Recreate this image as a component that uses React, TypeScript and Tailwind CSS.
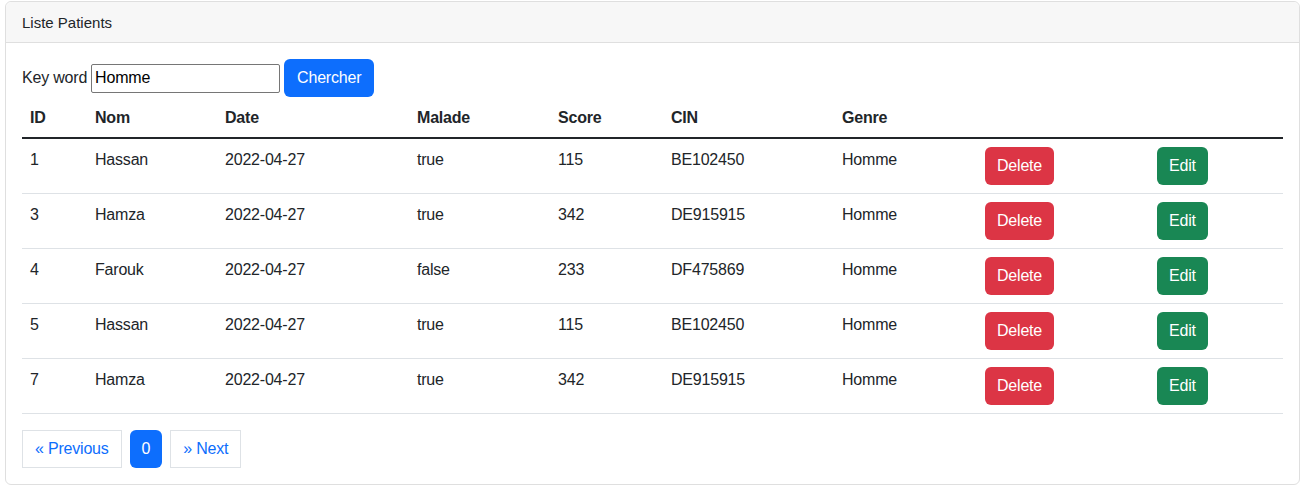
import { useState } from "react";

type Patient = {
  id: number;
  nom: string;
  date: string;
  malade: boolean;
  score: number;
  cin: string;
  genre: string;
};

const patients: Patient[] = [
  { id: 1, nom: "Hassan", date: "2022-04-27", malade: true, score: 115, cin: "BE102450", genre: "Homme" },
  { id: 3, nom: "Hamza", date: "2022-04-27", malade: true, score: 342, cin: "DE915915", genre: "Homme" },
  { id: 4, nom: "Farouk", date: "2022-04-27", malade: false, score: 233, cin: "DF475869", genre: "Homme" },
  { id: 5, nom: "Hassan", date: "2022-04-27", malade: true, score: 115, cin: "BE102450", genre: "Homme" },
  { id: 7, nom: "Hamza", date: "2022-04-27", malade: true, score: 342, cin: "DE915915", genre: "Homme" },
];

const headers = ["ID", "Nom", "Date", "Malade", "Score", "CIN", "Genre", "", ""];
const widths = ["w-[65px]", "w-[130px]", "w-[192px]", "w-[141px]", "w-[113px]", "w-[171px]", "w-[143px]", "w-[172px]", "w-auto"];

const App = () => {
  const [keyword, setKeyword] = useState("Homme");

  return (
    <div className="min-h-screen bg-white pt-px pl-[5px] pr-[9px] font-['Liberation_Sans',Arial,sans-serif] text-[16px] leading-6 text-[#212529] tracking-[-0.2px]">
      <div className="border border-[#dfdfdf] rounded-md">
        {/* Card header */}
        <div className="bg-[#f7f7f7] border-b border-[#dfdfdf] px-4 pt-[9px] pb-[7px] rounded-t-md text-[15px] tracking-normal">
          Liste Patients
        </div>

        <div className="p-4">
          {/* Search form */}
          <form className="flex items-center h-[38px]" onSubmit={(e) => e.preventDefault()}>
            <label className="mr-1">Key word</label>
            <input
              type="text"
              value={keyword}
              onChange={(e) => setKeyword(e.target.value)}
              className="w-[189px] h-[29px] border border-[#767676] rounded-[2px] px-[3px] text-[16px] text-black outline-none"
            />
            <button
              type="submit"
              className="ml-1 h-[38px] px-[13px] rounded-md bg-[#0d6efd] text-white"
            >
              Chercher
            </button>
          </form>

          {/* Patients table */}
          <table className="w-full border-collapse table-fixed">
            <thead>
              <tr className="border-b-2 border-[#212529]">
                {headers.map((h, i) => (
                  <th key={i} className={`${widths[i]} text-left font-bold px-2 pt-[9px] pb-[7px] h-10`}>
                    {h}
                  </th>
                ))}
              </tr>
            </thead>
            <tbody>
              {patients.map((p) => (
                <tr key={p.id} className="border-b border-[#dee2e6]">
                  <td className="px-2 pt-[9px] pb-[7px] align-top">{p.id}</td>
                  <td className="px-2 pt-[9px] pb-[7px] align-top">{p.nom}</td>
                  <td className="px-2 pt-[9px] pb-[7px] align-top">{p.date}</td>
                  <td className="px-2 pt-[9px] pb-[7px] align-top">{String(p.malade)}</td>
                  <td className="px-2 pt-[9px] pb-[7px] align-top">{p.score}</td>
                  <td className="px-2 pt-[9px] pb-[7px] align-top">{p.cin}</td>
                  <td className="px-2 pt-[9px] pb-[7px] align-top">{p.genre}</td>
                  <td className="px-2 py-2 align-top">
                    <button className="h-[38px] px-3 rounded-md bg-[#dc3545] text-white">Delete</button>
                  </td>
                  <td className="px-2 py-2 align-top">
                    <button className="h-[38px] px-3 rounded-md bg-[#198754] text-white">Edit</button>
                  </td>
                </tr>
              ))}
            </tbody>
          </table>

          {/* Pagination */}
          <ul className="flex gap-2 mt-4">
            <li>
              <a className="flex items-center h-[38px] px-3 border border-[#dee2e6] text-[#0d6efd]" href="#">
                « Previous
              </a>
            </li>
            <li>
              <a className="flex items-center h-[38px] px-[12px] rounded-md bg-[#0d6efd] text-white" href="#">
                0
              </a>
            </li>
            <li>
              <a className="flex items-center h-[38px] px-3 border border-[#dee2e6] text-[#0d6efd]" href="#">
                » Next
              </a>
            </li>
          </ul>
        </div>
      </div>
    </div>
  );
};

export default App;
